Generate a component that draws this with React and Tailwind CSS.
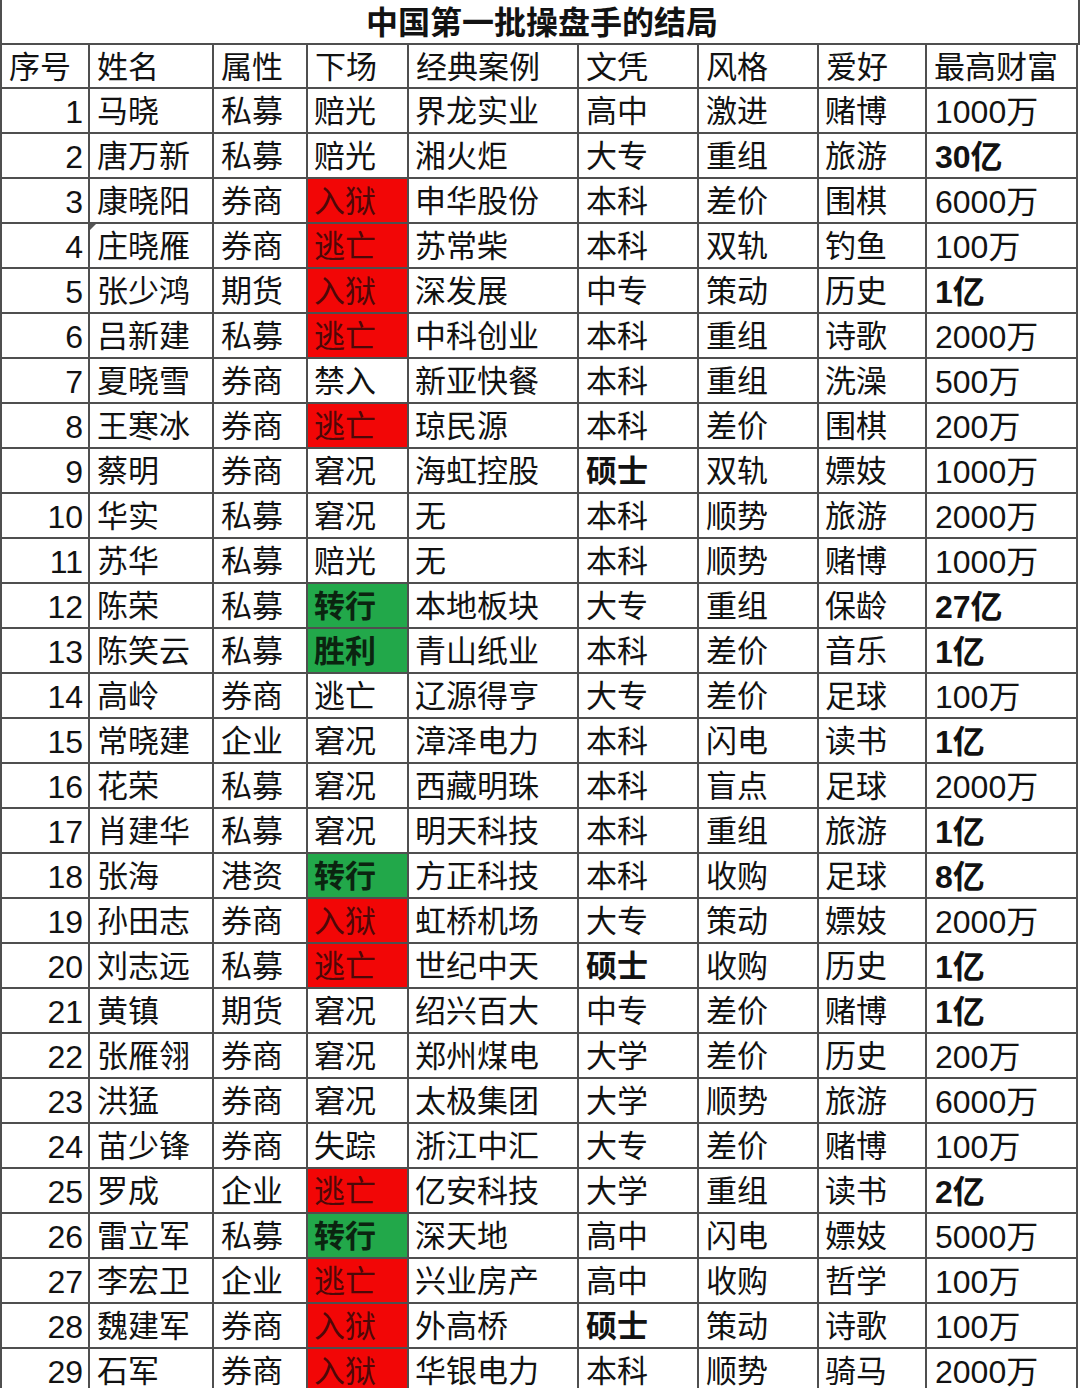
import React from "react";

const rows = [
  [1, "马晓", "私募", "赔光", "界龙实业", "高中", "激进", "赌博", "1000万"],
  [2, "唐万新", "私募", "赔光", "湘火炬", "大专", "重组", "旅游", "30亿"],
  [3, "康晓阳", "券商", "入狱", "申华股份", "本科", "差价", "围棋", "6000万"],
  [4, "庄晓雁", "券商", "逃亡", "苏常柴", "本科", "双轨", "钓鱼", "100万"],
  [5, "张少鸿", "期货", "入狱", "深发展", "中专", "策动", "历史", "1亿"],
  [6, "吕新建", "私募", "逃亡", "中科创业", "本科", "重组", "诗歌", "2000万"],
  [7, "夏晓雪", "券商", "禁入", "新亚快餐", "本科", "重组", "洗澡", "500万"],
  [8, "王寒冰", "券商", "逃亡", "琼民源", "本科", "差价", "围棋", "200万"],
  [9, "蔡明", "券商", "窘况", "海虹控股", "硕士", "双轨", "嫖妓", "1000万"],
  [10, "华实", "私募", "窘况", "无", "本科", "顺势", "旅游", "2000万"],
  [11, "苏华", "私募", "赔光", "无", "本科", "顺势", "赌博", "1000万"],
  [12, "陈荣", "私募", "转行", "本地板块", "大专", "重组", "保龄", "27亿"],
  [13, "陈笑云", "私募", "胜利", "青山纸业", "本科", "差价", "音乐", "1亿"],
  [14, "高岭", "券商", "逃亡", "辽源得亨", "大专", "差价", "足球", "100万"],
  [15, "常晓建", "企业", "窘况", "漳泽电力", "本科", "闪电", "读书", "1亿"],
  [16, "花荣", "私募", "窘况", "西藏明珠", "本科", "盲点", "足球", "2000万"],
  [17, "肖建华", "私募", "窘况", "明天科技", "本科", "重组", "旅游", "1亿"],
  [18, "张海", "港资", "转行", "方正科技", "本科", "收购", "足球", "8亿"],
  [19, "孙田志", "券商", "入狱", "虹桥机场", "大专", "策动", "嫖妓", "2000万"],
  [20, "刘志远", "私募", "逃亡", "世纪中天", "硕士", "收购", "历史", "1亿"],
  [21, "黄镇", "期货", "窘况", "绍兴百大", "中专", "差价", "赌博", "1亿"],
  [22, "张雁翎", "券商", "窘况", "郑州煤电", "大学", "差价", "历史", "200万"],
  [23, "洪猛", "券商", "窘况", "太极集团", "大学", "顺势", "旅游", "6000万"],
  [24, "苗少锋", "券商", "失踪", "浙江中汇", "大专", "差价", "赌博", "100万"],
  [25, "罗成", "企业", "逃亡", "亿安科技", "大学", "重组", "读书", "2亿"],
  [26, "雷立军", "私募", "转行", "深天地", "高中", "闪电", "嫖妓", "5000万"],
  [27, "李宏卫", "企业", "逃亡", "兴业房产", "高中", "收购", "哲学", "100万"],
  [28, "魏建军", "券商", "入狱", "外高桥", "硕士", "策动", "诗歌", "100万"],
  [29, "石军", "券商", "入狱", "华银电力", "本科", "顺势", "骑马", "2000万"],
];

const red = new Set([3, 4, 5, 6, 8, 19, 20, 25, 27, 28, 29]);
const green = new Set([12, 13, 18, 26]);

const gridCols =
  "grid grid-cols-[88px_124px_94px_101px_170px_120px_120px_108px_151px]";
const cell =
  "border-r-2 border-b-2 border-[#4f4f4f] flex items-center pt-[2px] overflow-hidden whitespace-nowrap";

function Cell({ children, className = "" }) {
  return <div className={`${cell} ${className}`}>{children}</div>;
}

export default function App() {
  const headers = ["序号", "姓名", "属性", "下场", "经典案例", "文凭", "风格", "爱好", "最高财富"];
  return (
    <div
      className="w-[1080px] h-[1388px] overflow-hidden bg-white text-[#121212] text-[31px] leading-none"
      style={{ fontFamily: '"Liberation Sans", "Noto Sans CJK SC", sans-serif' }}
    >
      <div className="w-[1080px] border-l-2 border-[#4f4f4f]">
        <div className="h-[45px] border-r-2 border-b-2 border-[#4f4f4f] flex items-center justify-center pt-[2px]">
          <span className="font-bold text-[32px] pl-[4px]">中国第一批操盘手的结局</span>
        </div>
        <div className={`${gridCols} h-[44px]`}>
          {headers.map((h) => (
            <Cell key={h} className="pl-[7px]">
              {h}
            </Cell>
          ))}
        </div>
        {rows.map((r) => {
          const [n, name, attr, fate, cas, edu, style, hobby, wealth] = r;
          const fateClass = red.has(n)
            ? "bg-[#f20606] text-[#4e0808]"
            : green.has(n)
            ? "bg-[#22a84a] text-[#0b2410] font-bold"
            : "";
          const bold = /亿/.test(wealth);
          return (
            <div key={n} className={`${gridCols} h-[45px]`}>
              <Cell className="justify-end pr-[5px] text-[32px]">{n}</Cell>
              <Cell className="pl-[7px] relative">
                {n === 4 && (
                  <span className="absolute left-0 top-0 w-0 h-0 border-t-[6px] border-r-[6px] border-t-[#555] border-r-transparent" />
                )}
                {name}
              </Cell>
              <Cell className="pl-[7px]">{attr}</Cell>
              <Cell className={`pl-[6px] ${fateClass}`}>{fate}</Cell>
              <Cell className="pl-[6px]">{cas}</Cell>
              <Cell className={`pl-[7px] ${edu === "硕士" ? "font-bold" : ""}`}>{edu}</Cell>
              <Cell className="pl-[7px]">{style}</Cell>
              <Cell className="pl-[6px]">{hobby}</Cell>
              <Cell className={`pl-[8px] text-[32px] ${bold ? "font-bold" : ""}`}>{wealth}</Cell>
            </div>
          );
        })}
      </div>
    </div>
  );
}
